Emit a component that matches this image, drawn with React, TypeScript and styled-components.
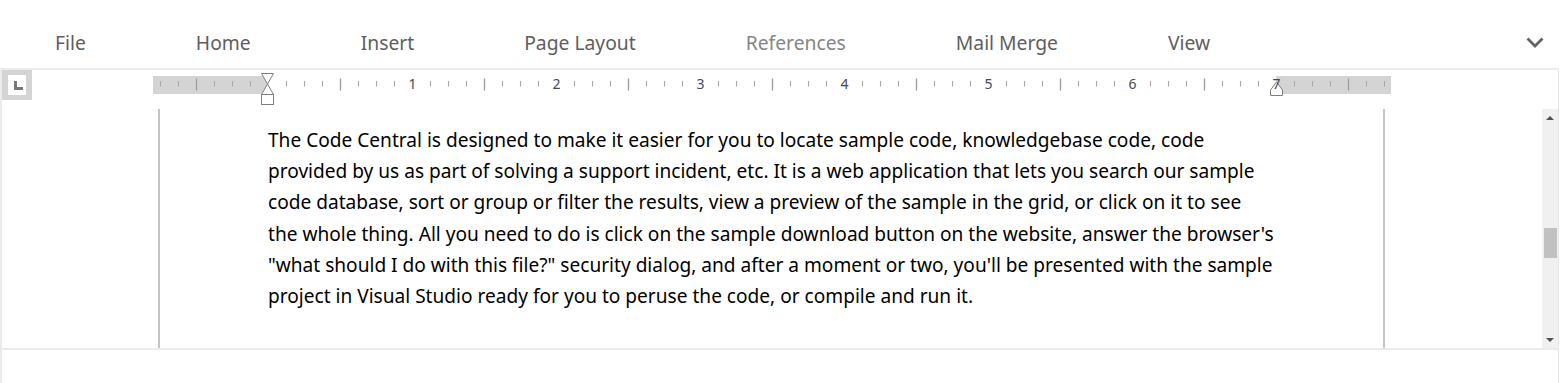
import styled, { createGlobalStyle } from 'styled-components';

const GlobalStyle = createGlobalStyle`
  html, body {
    margin: 0;
    padding: 0;
    background: #ffffff;
  }
  body {
    font-family: "Noto Sans", "Liberation Sans", sans-serif;
  }
`

const tabs = [
    { label: 'File' },
    { label: 'Home' },
    { label: 'Insert' },
    { label: 'Page Layout' },
    { label: 'References', muted: true },
    { label: 'Mail Merge' },
    { label: 'View' },
]

const lines = [
    'The Code Central is designed to make it easier for you to locate sample code, knowledgebase code, code',
    'provided by us as part of solving a support incident, etc. It is a web application that lets you search our sample',
    'code database, sort or group or filter the results, view a preview of the sample in the grid, or click on it to see',
    "the whole thing. All you need to do is click on the sample download button on the website, answer the browser's",
    '"what should I do with this file?" security dialog, and after a moment or two, you\'ll be presented with the sample',
    'project in Visual Studio ready for you to peruse the code, or compile and run it.',
]

// ruler geometry: 144px per inch, tick every 1/8 inch
const ORIGIN = 115
const STEP = 18

function Ruler() {
    const ticks = []
    for (let k = -6; k <= 62; k++) {
        if (k === 0) continue
        const x = ORIGIN + k * STEP + 0.5
        if (k % 8 === 0) {
            if (k === 56) continue
            ticks.push(
                <text key={k} x={x} y={20} textAnchor="middle" fontSize="14" fill="#454a58"
                      fontFamily='"Noto Sans", sans-serif'>{k / 8}</text>
            )
        } else if (k % 4 === 0) {
            ticks.push(<line key={k} x1={x} x2={x} y1={9.5} y2={21.5} stroke="#9e9e9e" strokeWidth="1.3" />)
        } else {
            ticks.push(<line key={k} x1={x} x2={x} y1={12} y2={17.5} stroke="#a8a8a8" strokeWidth="1.1" />)
        }
    }
    return (
        <RulerSvg width="1240" height="38" viewBox="0 0 1240 38">
            <rect x="0" y="7" width={ORIGIN} height="18" fill="#d4d4d4" />
            <rect x={ORIGIN + 56 * STEP} y="7" width="115" height="18" fill="#d4d4d4" />
            {ticks}
            {/* first line / hanging indent */}
            <path d="M108.5 4.5 H120.5 L114.5 15 L120.5 25.5 H108.5 L114.5 15 Z" fill="#ffffff" stroke="#7f7f7f" />
            <rect x="108.5" y="25.5" width="12" height="10" fill="#ffffff" stroke="#7f7f7f" />
            {/* right indent */}
            <path d="M1117.5 26.5 V21 L1123.5 13 L1129.5 21 V26.5 Z" fill="#ffffff" stroke="#7f7f7f" />
            <text x={ORIGIN + 56 * STEP + 0.5} y={20} textAnchor="middle" fontSize="14" fill="#454a58"
                  fontFamily='"Noto Sans", sans-serif'>7</text>
        </RulerSvg>
    )
}

function App() {
    return (
        <Root>
            <GlobalStyle />
            <TabBar>
                {tabs.map(t => (
                    <Tab key={t.label} $muted={t.muted}>{t.label}</Tab>
                ))}
                <Collapse>
                    <svg width="18" height="11" viewBox="0 0 18 11">
                        <path d="M1.5 1.5 L9 9 L16.5 1.5" fill="none" stroke="#646464" strokeWidth="2.8" />
                    </svg>
                </Collapse>
            </TabBar>
            <Editor>
                <RulerRow>
                    <TabStopBox>
                        <TabStopInner>
                            <TabStopGlyph />
                        </TabStopInner>
                    </TabStopBox>
                    <Ruler />
                </RulerRow>
                <ViewArea>
                    <PageArea>
                        <Page>
                            <Paragraph>
                                {lines.map((l, i) => (
                                    <Line key={i}>{l}</Line>
                                ))}
                            </Paragraph>
                        </Page>
                    </PageArea>
                    <ScrollBar>
                        <ArrowButton>
                            <Triangle $dir="up" />
                        </ArrowButton>
                        <Track>
                            <Thumb />
                        </Track>
                        <ArrowButton>
                            <Triangle $dir="down" />
                        </ArrowButton>
                    </ScrollBar>
                </ViewArea>
                <StatusArea />
            </Editor>
        </Root>
    )
}
export default App

const Root = styled.div`
    width: 1560px;
    height: 383px;
    overflow: hidden;
`

const TabBar = styled.div`
    height: 68px;
    box-sizing: border-box;
    padding-top: 16px;
    display: flex;
    align-items: center;
`

const Tab = styled.div<{ $muted?: boolean }>`
    padding: 0 55px;
    font-size: 19.3px;
    color: ${p => (p.$muted ? '#858585' : '#5e5e5e')};
    white-space: nowrap;
`

const Collapse = styled.div`
    margin-left: auto;
    margin-right: 16px;
    display: flex;
    align-items: center;
`

const Editor = styled.div`
    width: 1559px;
    box-sizing: border-box;
    border-top: 2px solid #ebebeb;
    border-left: 2px solid #ebebeb;
    border-right: 1px solid #e6e6e6;
    height: 315px;
    display: flex;
    flex-direction: column;
`

const RulerRow = styled.div`
    height: 39px;
    display: flex;
    align-items: flex-start;
`

const TabStopBox = styled.div`
    width: 30px;
    height: 30px;
    background: #d4d4d4;
    display: flex;
    align-items: center;
    justify-content: center;
`

const TabStopInner = styled.div`
    width: 18px;
    height: 20px;
    background: #ffffff;
    display: flex;
    align-items: center;
    justify-content: center;
`

const TabStopGlyph = styled.div`
    width: 6px;
    height: 6px;
    border-left: 3px solid #787878;
    border-bottom: 3px solid #787878;
    margin-left: 2px;
`

const RulerSvg = styled.svg`
    display: block;
    margin-left: 121px;
    margin-top: -1px;
`

const ViewArea = styled.div`
    height: 239px;
    display: flex;
    border-bottom: 2px solid #ebebeb;
`

const PageArea = styled.div`
    flex: 1;
    padding-left: 156px;
    overflow: hidden;
`

const Page = styled.div`
    width: 1227px;
    height: 100%;
    box-sizing: border-box;
    border-left: 2px solid #c4c4c4;
    border-right: 2px solid #c4c4c4;
    padding: 16px 0 0 108px;
`

const Paragraph = styled.div`
    font-family: "Noto Sans", "Liberation Sans", sans-serif;
    font-size: 19.1px;
    line-height: 31.2px;
    color: #000000;
`

const Line = styled.span`
    display: block;
    white-space: nowrap;
`

const ScrollBar = styled.div`
    width: 16px;
    background: #f0f0f0;
    display: flex;
    flex-direction: column;
`

const ArrowButton = styled.div`
    height: 17px;
    display: flex;
    align-items: center;
    justify-content: center;
`

const Triangle = styled.div<{ $dir: 'up' | 'down' }>`
    width: 0;
    height: 0;
    border-left: 4px solid transparent;
    border-right: 4px solid transparent;
    ${p => (p.$dir === 'up'
        ? 'border-bottom: 4px solid #505050;'
        : 'border-top: 4px solid #505050;')}
`

const Track = styled.div`
    flex: 1;
`

const Thumb = styled.div`
    width: 13px;
    height: 30px;
    margin: 102px 0 0 2px;
    background: #c1c1c1;
`

const StatusArea = styled.div`
    flex: 1;
`
